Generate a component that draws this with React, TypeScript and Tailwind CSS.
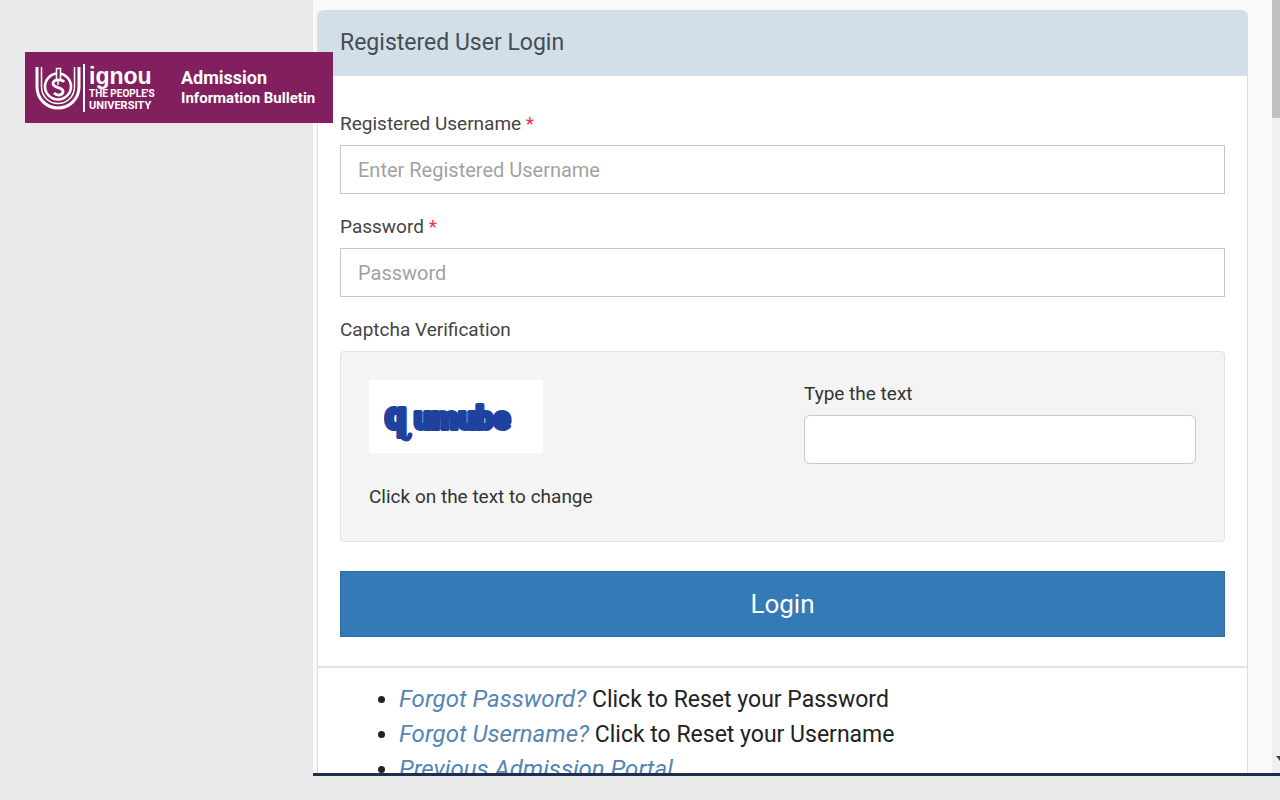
import React from 'react';

const INPUT = 'w-full h-[49px] px-[17px] bg-white border border-[#c8c8c8] text-xl text-[#444] placeholder:text-[#a2a2a2] outline-none focus:border-[#66afe9]';
const LINK = 'italic text-2xl leading-[35px] text-[#5585b5]';

function IgnouEmblem() {
  return (
    <svg className="w-[46px] h-[46px] shrink-0" viewBox="0 0 46 46" fill="none" stroke="#fff" aria-hidden="true">
      <path d="M2 2v20a21 21 0 0 0 42 0V2" strokeWidth="3" />
      <path d="M6.500 2v20a16.500 16.500 0 0 0 33 0V2" strokeWidth="1.5" />
      <circle cx="23" cy="21.500" r="13" strokeWidth="2.6" />
      <path d="M21.500 14V3.500h4V14" strokeWidth="1.5" fill="#82205f" />
      <path d="M29 17c-2-3-10-3-11 1-1 5 10 4 10 8 0 5-6 5-9 2" strokeWidth="2.8" />
      <path d="M23 14v6" strokeWidth="1.5" />
    </svg>
  );
}

function BulletinBanner() {
  return (
    <div className="absolute left-[25px] top-[52px] w-[308px] h-[71px] pl-[10px] flex items-center bg-[#82205f] text-white whitespace-nowrap">
      <IgnouEmblem />
      <div className="ml-[2px] w-[2px] h-[48px] bg-white" />
      <div className="ml-1 w-[92px]">
        <div className="font-['Liberation_Sans'] font-bold text-[23px] leading-6">ignou</div>
        <div className="text-[10px] leading-3 font-bold">THE PEOPLE'S</div>
        <div className="text-[11px] leading-3 font-bold">UNIVERSITY</div>
      </div>
      <div className="font-bold">
        <div className="text-lg leading-5">Admission</div>
        <div className="text-[15px] leading-5">Information Bulletin</div>
      </div>
    </div>
  );
}

function Required() {
  return <span className="text-[#f0323c]">*</span>;
}

export default function App() {
  return (
    <div className="relative h-screen flex overflow-hidden bg-[#e9e9ea] pl-[313px] pb-6 font-[Roboto,sans-serif] text-[#444]">
      {/* Portal page */}
      <main className="flex-1 min-w-0 flex overflow-hidden bg-[#fafafa] border-b-3 border-[#1d2f4f]">
        <div className="flex-1 min-w-0 pt-[10px] pl-1 pr-6">
          <section className="bg-white border border-[#d3dfe8] border-t-0 rounded-t-md">
            <h1 className="h-[66px] px-[22px] flex items-center rounded-t-md bg-[#d3dfe8] text-[23px] text-[#454d53]">
              Registered User Login
            </h1>

            <form className="px-[22px] pt-[34px] pb-[29px] text-[19px] leading-7" onSubmit={(e) => e.preventDefault()}>
              <div className="mb-[19px]">
                <label htmlFor="username" className="block mb-[7px]">
                  Registered Username <Required />
                </label>
                <input id="username" type="text" placeholder="Enter Registered Username" className={INPUT} />
              </div>

              <div className="mb-[19px]">
                <label htmlFor="password" className="block mb-[7px]">
                  Password <Required />
                </label>
                <input id="password" type="password" placeholder="Password" className={INPUT} />
              </div>

              {/* Captcha */}
              <div className="mb-[7px]">Captcha Verification</div>
              <div className="px-7 pt-7 pb-[30px] grid grid-cols-2 gap-[43px] bg-[#f4f4f4] border border-[#e2e2e2] rounded text-[#333]">
                <div>
                  <button type="button" aria-label="Change captcha" className="block w-[174px] h-[73px] pl-[15px] bg-white text-left">
                    <svg className="w-[140px] h-[60px]" viewBox="0 0 140 60" aria-hidden="true">
                      <g fill="#1f429f" stroke="#1f429f" strokeWidth="4" strokeLinejoin="round" fontFamily="Roboto" fontWeight="900">
                        <text x="1" y="42" fontSize="38">q</text>
                        <text x="30" y="42" fontSize="31">umube</text>
                      </g>
                      <path d="M18 46c0 7 7 8 8 2" fill="none" stroke="#1f429f" strokeWidth="5" strokeLinecap="round" />
                    </svg>
                  </button>
                  <p className="mt-[30px]">Click on the text to change</p>
                </div>
                <div>
                  <label htmlFor="captcha" className="block mb-[7px]">Type the text</label>
                  <input id="captcha" type="text" className={`${INPUT} rounded-md`} />
                </div>
              </div>

              <button type="submit" className="mt-[29px] w-full h-[66px] bg-[#337ab7] border border-[#2e6da4] text-white text-[26px]">
                Login
              </button>
            </form>

            <ul className="list-disc border-t-2 border-[#dde6ec] pt-[14px] pb-4 pl-[81px] text-[23px] leading-[35px] text-[#222]">
              <li><a href="#" className={LINK}>Forgot Password?</a> Click to Reset your Password</li>
              <li><a href="#" className={LINK}>Forgot Username?</a> Click to Reset your Username</li>
              <li><a href="#" className={LINK}>Previous Admission Portal</a></li>
            </ul>
          </section>
        </div>

        {/* Scrollbar */}
        <div className="w-2 shrink-0 flex flex-col justify-between bg-[#f0f0f0] overflow-hidden">
          <div className="h-[118px] bg-[#c1c1c1]" />
          <svg className="w-2 h-2 mb-[10px]" viewBox="0 0 8 8" aria-hidden="true">
            <path d="M4 1h8l-4 5z" fill="#444" />
          </svg>
        </div>
      </main>

      <BulletinBanner />
    </div>
  );
}
